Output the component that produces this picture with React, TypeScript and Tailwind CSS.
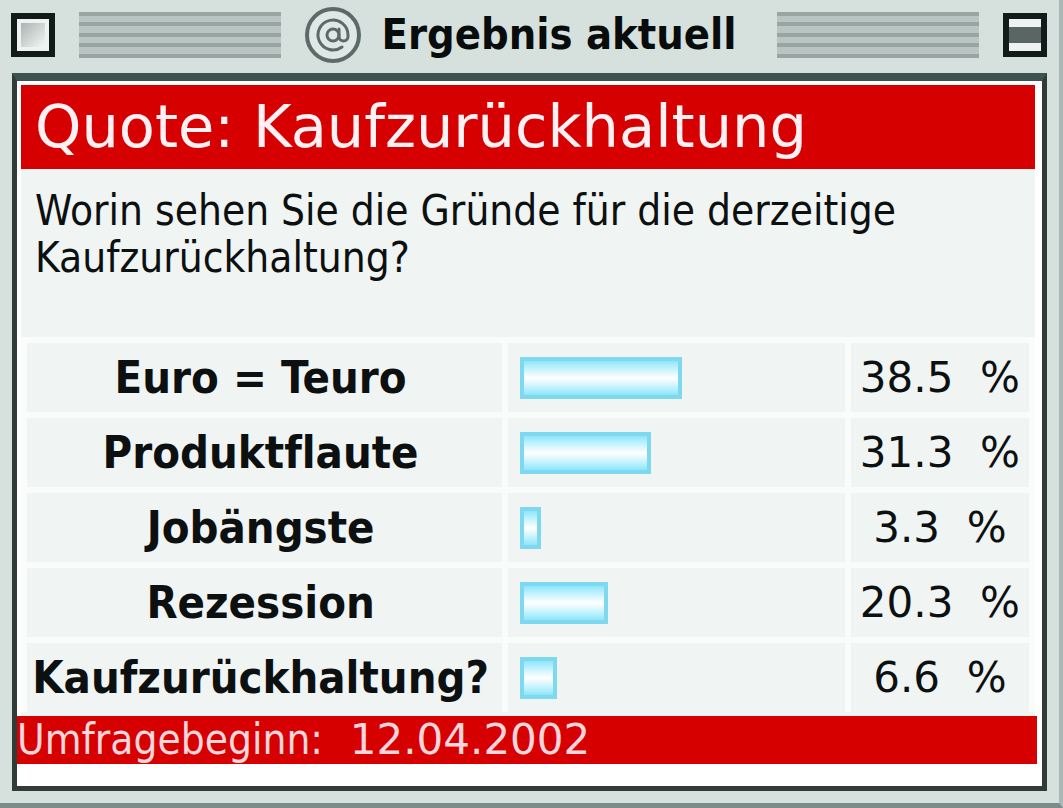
import { AtSign } from "lucide-react";
import React from "react";

interface IAnswer {
  label: string;
  value: string;
  bar: number;
}

const answers: IAnswer[] = [
  { label: "Euro = Teuro", value: "38.5", bar: 162 },
  { label: "Produktflaute", value: "31.3", bar: 131 },
  { label: "Jobängste", value: "3.3", bar: 21 },
  { label: "Rezession", value: "20.3", bar: 88 },
  { label: "Kaufzurückhaltung?", value: "6.6", bar: 37 },
];

function Stripes() {
  return (
    <div className="flex h-[46px] flex-1 flex-col justify-between bg-[#b9c5c3]">
      <div className="h-1 bg-[#98a5a3]" />
      <div className="h-1 bg-[#98a5a3]" />
      <div className="h-1 bg-[#98a5a3]" />
      <div className="h-1 bg-[#98a5a3]" />
      <div className="h-1 bg-[#98a5a3]" />
    </div>
  );
}

function TitleBar() {
  return (
    <header className="flex h-[73px] items-center pr-3 pb-1 pl-[11px]">
      <button
        aria-label="Schließen"
        className="h-11 w-11 shrink-0 border-[6px] border-[#101b1a] bg-[#eef3f2] p-1"
      >
        <span className="block h-full w-full bg-linear-to-br from-[#aab4b2] to-[#f4f7f6]" />
      </button>
      <div className="flex flex-1 items-center px-6">
        <Stripes />
        <div className="flex items-center gap-5 pr-10 pl-6">
          <span className="flex h-14 w-14 items-center justify-center rounded-full border-4 border-[#5c6b69] bg-[#dfe8e5] text-[#5c6b69]">
            <AtSign size={36} strokeWidth={2} />
          </span>
          <h1 className="font-['DejaVu_Sans_Condensed',sans-serif] text-[43px] leading-none font-bold whitespace-nowrap text-[#080c0c]">
            Ergebnis aktuell
          </h1>
        </div>
        <Stripes />
      </div>
      <button
        aria-label="Einklappen"
        className="flex h-11 w-11 shrink-0 items-center border-[6px] border-[#101b1a] bg-[#eef3f2]"
      >
        <span className="h-4 w-full bg-[#5a6664]" />
      </button>
    </header>
  );
}

export default function App() {
  return (
    <div className="flex min-h-screen flex-col border-r-4 border-b-[5px] border-r-[#a9b8b6] border-b-[#7b8c8a] bg-[#d6e0dd] font-['DejaVu_Sans',sans-serif] text-[#0c1010] [font-variant-ligatures:none]">
      <TitleBar />
      <main className="mx-3 mb-3 flex flex-1 flex-col border-x-[5px] border-t-8 border-b-[5px] border-[#2f3c3a] border-t-[#3d5350] bg-white">
        <div className="mt-1 mr-[7px] ml-1 flex-1 bg-[#f0f4f3]">
          <h2 className="h-[84px] bg-[#d60000] px-[14px] text-[59px] leading-[84px] text-[#fff0f4]">
            Quote: Kaufzurückhaltung
          </h2>
          <p className="h-[168px] px-[14px] pt-[18px] font-['DejaVu_Sans_Condensed',sans-serif] text-[42px] leading-[47px]">
            Worin sehen Sie die Gründe für die derzeitige Kaufzurückhaltung?
          </p>
          <table className="w-full table-fixed border-separate border-spacing-x-[6px] border-spacing-y-0 bg-[#fafcfb]">
            <colgroup>
              <col className="w-[48%]" />
              <col />
              <col className="w-[18%]" />
            </colgroup>
            <tbody>
              {answers.map((answer) => (
                <tr key={answer.label} className="h-[75px]">
                  <th
                    scope="row"
                    className="border-t-[6px] border-[#fafcfb] bg-[#f0f4f3] pr-2 font-['DejaVu_Sans_Condensed',sans-serif] text-[45px] leading-none font-bold whitespace-nowrap"
                  >
                    {answer.label}
                  </th>
                  <td className="border-t-[6px] border-[#fafcfb] bg-[#f0f4f3] pl-3">
                    <div
                      className="h-[42px] border-4 border-[#7fd9ee] bg-linear-to-b from-[#8be6fb] via-white to-[#8be6fb]"
                      style={{ width: answer.bar }}
                    />
                  </td>
                  <td className="border-t-[6px] border-[#fafcfb] bg-[#f0f4f3] text-center text-[42px] leading-none whitespace-nowrap">
                    {answer.value}&nbsp;&nbsp;%
                  </td>
                </tr>
              ))}
            </tbody>
          </table>
        </div>
        <footer className="mr-[5px] mb-[22px] h-[48px] bg-[#d60000] text-[42px] leading-[48px] text-[#ffd6dc]">
          <span className="font-['DejaVu_Sans_Condensed',sans-serif]">
            Umfragebeginn:
          </span>
          &nbsp;&nbsp;12.04.2002
        </footer>
      </main>
    </div>
  );
}
